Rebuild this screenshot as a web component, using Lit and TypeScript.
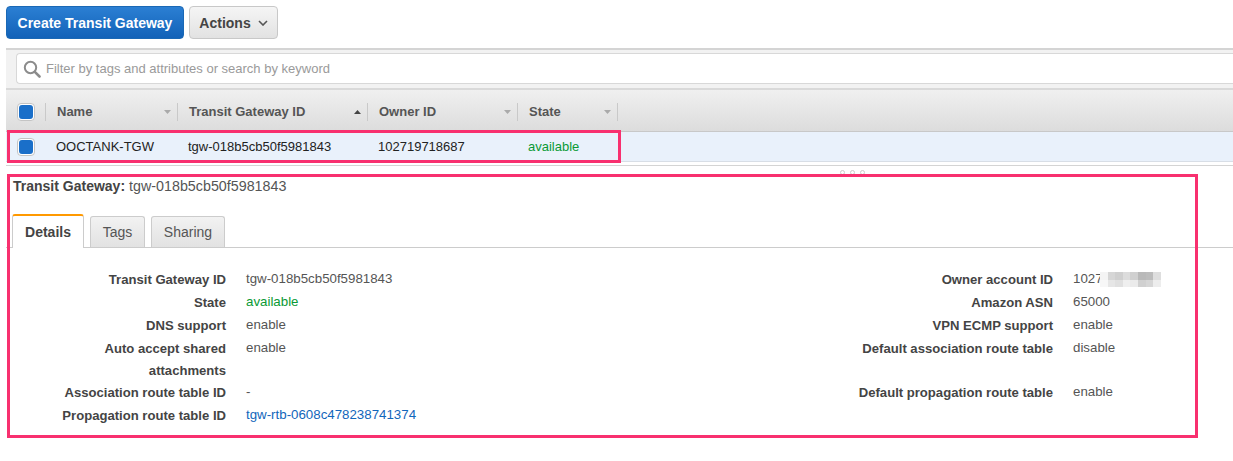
import { LitElement, html, css } from 'lit';
import { customElement } from 'lit/decorators.js';

const caret = (up = false, dark = false) => html`
  <svg class="sort" width="7" height="4" viewBox="0 0 7 4">
    <path d=${up ? 'M0 4L3.5 0L7 4Z' : 'M0 0L3.5 4L7 0Z'} fill=${dark ? '#444' : '#aaa'}></path>
  </svg>
`;

const leftRows = [
  { label: 'Transit Gateway ID', value: 'tgw-018b5cb50f5981843' },
  { label: 'State', value: 'available', kind: 'ok' },
  { label: 'DNS support', value: 'enable' },
  { label: 'Auto accept shared attachments', value: 'enable', tall: true },
  { label: 'Association route table ID', value: '-' },
  { label: 'Propagation route table ID', value: 'tgw-rtb-0608c478238741374', kind: 'link' },
];

const rightRows = [
  { label: 'Owner account ID', value: '1027', blur: true },
  { label: 'Amazon ASN', value: '65000' },
  { label: 'VPN ECMP support', value: 'enable' },
  { label: 'Default association route table', value: 'disable', tall: true },
  { label: 'Default propagation route table', value: 'enable' },
];

// pixelated redaction next to the owner account id, 8 x 2 cells
const blurCells = [
  '#f4f4f4', '#d6d6d6', '#cfcfcf', '#dcdcdc', '#d0d0d0', '#b9b9b9', '#bcbcbc', '#dedede',
  '#f7f7f7', '#e6e6e6', '#e0e0e0', '#efefef', '#ebebeb', '#d0d0d0', '#d6d6d6', '#ededed',
];

@customElement('app-root')
export class AppRoot extends LitElement {
  static styles = css`
    :host {
      display: block;
      font-family: 'Liberation Sans', Arial, sans-serif;
      font-size: 13px;
      color: #444;
    }

    .page {
      position: relative;
      width: 1233px;
      height: 461px;
      overflow: hidden;
      background: #fff;
    }

    .toolbar {
      display: flex;
      gap: 5px;
      height: 48px;
      padding: 6px 0 0 6px;
      box-sizing: border-box;
    }

    button {
      height: 33px;
      border-radius: 4px;
      font-family: inherit;
      font-size: 14px;
      font-weight: bold;
      padding: 0;
    }

    button.primary {
      width: 178px;
      color: #fff;
      background: linear-gradient(#2b7fd3, #1262b8);
      border: 1px solid #1a68b5;
    }

    button.secondary {
      display: flex;
      align-items: center;
      justify-content: center;
      gap: 7px;
      width: 89px;
      color: #444;
      background: linear-gradient(#f5f5f5, #e2e2e2);
      border: 1px solid #c8c8c8;
    }

    .grid {
      margin-left: 6px;
      border-top: 2px solid #d4d4d4;
    }

    .search {
      height: 40px;
      padding: 3px 0 0 10px;
      box-sizing: border-box;
      background: #f2f2f2;
      border-bottom: 2px solid #d9d9d9;
    }

    .search-box {
      display: flex;
      align-items: center;
      gap: 5px;
      height: 31px;
      padding-left: 6px;
      box-sizing: border-box;
      background: #fff;
      border: 1px solid #d8d8d8;
      border-right: none;
      border-radius: 4px 0 0 4px;
      color: #9a9a9a;
      font-size: 13px;
    }

    .head {
      display: flex;
      align-items: center;
      height: 42px;
      padding-top: 2px;
      background: linear-gradient(#f0f0f0, #dcdcdc);
      border-bottom: 1px solid #c8c8c8;
      box-sizing: border-box;
      font-weight: bold;
      color: #555;
    }

    .row {
      display: flex;
      align-items: center;
      height: 30px;
      background: #e9f1fb;
      border-bottom: 1px solid #d8dee6;
      box-sizing: border-box;
      color: #222;
    }

    .c0 { width: 40px; box-sizing: border-box; }
    .c1 { width: 132px; }
    .c2 { width: 190px; }
    .c3 { width: 150px; }
    .c4 { width: 100px; }

    .head > div {
      display: flex;
      align-items: center;
      justify-content: space-between;
      height: 18px;
      box-sizing: border-box;
      padding: 0 6px 0 11px;
      border-right: 1px solid #c9c9c9;
    }

    .head > .c0 {
      justify-content: flex-start;
      padding: 0 0 0 11px;
    }

    .row > div:not(.c0) { padding-left: 10px; box-sizing: border-box; }
    .row > .c0 { padding-left: 11px; }

    .check {
      display: flex;
      align-items: center;
      justify-content: center;
      width: 18px;
      height: 18px;
      box-sizing: border-box;
      background: #fff;
      border: 1px solid #c4c4c4;
      border-radius: 4px;
    }

    .check i {
      display: block;
      width: 14px;
      height: 14px;
      background: #1a6fc9;
      border-radius: 3px;
    }

    .ok { color: #0a9a35; }
    .link { color: #1166bb; }

    .splitter {
      display: flex;
      justify-content: center;
      gap: 5px;
      height: 11px;
      margin: 3px 0 0 6px;
      border-top: 1px solid #d4d4d4;
      padding: 4px 0 0 465px;
      box-sizing: border-box;
    }

    .splitter i {
      width: 5px;
      height: 5px;
      box-sizing: border-box;
      border: 1px solid #ccc;
      border-radius: 50%;
    }

    .title {
      margin: 3px 0 0 13px;
      height: 15px;
      line-height: 15px;
      font-size: 14.3px;
      color: #555;
    }

    .title b {
      font-size: 14px;
      color: #444;
    }

    .tabs {
      display: flex;
      align-items: flex-end;
      gap: 6px;
      height: 33px;
      margin: 20px 0 0 6px;
      padding-left: 6px;
      border-bottom: 1px solid #ccc;
      font-size: 14px;
    }

    .tab {
      display: flex;
      align-items: center;
      justify-content: center;
      height: 31px;
      box-sizing: border-box;
      border: 1px solid #ccc;
      border-bottom: none;
      border-radius: 3px 3px 0 0;
      background: linear-gradient(#f2f2f2, #e2e2e2);
      color: #555;
    }

    .tab.details-tab {
      width: 72px;
      height: 34px;
      margin-bottom: -1px;
      background: #fff;
      border-top: 2px solid #f90;
      font-weight: bold;
      color: #444;
    }

    .tab.tags-tab { width: 55px; }
    .tab.sharing-tab { width: 74px; }

    .details {
      display: flex;
      justify-content: space-between;
      padding: 21px 0 0 0;
    }

    .col {
      display: grid;
      grid-auto-rows: min-content;
      row-gap: 2px;
      align-content: start;
    }

    .col.left { grid-template-columns: 226px 1fr; width: 480px; }
    .col.right { grid-template-columns: 253px 1fr; width: 433px; }

    .label {
      padding-left: 40px;
      text-align: right;
      font-size: 13.1px;
      font-weight: bold;
      line-height: 21px;
      color: #444;
    }

    .value {
      position: relative;
      padding-left: 20px;
      font-size: 13.3px;
      line-height: 20px;
      color: #555;
    }

    .value.ok { color: #0a9a35; }
    .value.link { color: #1166bb; }

    .label.tall {
      height: 42px;
      line-height: 22px;
    }

    /* sits over the end of the account id */
    .redact {
      position: absolute;
      left: 47px;
      top: 3px;
      display: grid;
      grid-template-columns: repeat(8, 7.6px);
      grid-auto-rows: 7.5px;
    }

    /* annotation frames drawn over the screenshot */
    .mark {
      position: absolute;
      box-sizing: border-box;
      border: 3px solid #f8306f;
      pointer-events: none;
    }

    .mark.row-mark { left: 7px; top: 130px; width: 614px; height: 33px; }
    .mark.detail-mark { left: 7px; top: 174px; width: 1191px; height: 264px; }
  `;

  renderRow(r: { label: string; value: string; kind?: string; tall?: boolean; blur?: boolean }) {
    return html`
      <div class="label ${r.tall ? 'tall' : ''}">${r.label}</div>
      <div class="value ${r.kind ?? ''}">${r.value}${r.blur
        ? html`<span class="redact">${blurCells.map((c) => html`<i style="background:${c}"></i>`)}</span>`
        : ''}</div>
    `;
  }

  render() {
    return html`
      <div class="page">
        <div class="toolbar">
          <button class="primary">Create Transit Gateway</button>
          <button class="secondary">
            Actions
            <svg width="10" height="6" viewBox="0 0 10 6">
              <path d="M1 1L5 5L9 1" fill="none" stroke="#555" stroke-width="1.6"></path>
            </svg>
          </button>
        </div>

        <div class="grid">
          <div class="search">
            <div class="search-box">
              <svg width="18" height="18" viewBox="0 0 18 18">
                <circle cx="7.5" cy="7.5" r="5.7" fill="none" stroke="#8c8c8c" stroke-width="2"></circle>
                <path d="M11.8 11.8L16.5 16.5" stroke="#8c8c8c" stroke-width="2.6" stroke-linecap="round"></path>
              </svg>
              Filter by tags and attributes or search by keyword
            </div>
          </div>
          <div class="head">
            <div class="c0"><span class="check"><i></i></span></div>
            <div class="c1">Name ${caret()}</div>
            <div class="c2">Transit Gateway ID ${caret(true, true)}</div>
            <div class="c3">Owner ID ${caret()}</div>
            <div class="c4">State ${caret()}</div>
          </div>
          <div class="row">
            <div class="c0"><span class="check"><i></i></span></div>
            <div class="c1">OOCTANK-TGW</div>
            <div class="c2">tgw-018b5cb50f5981843</div>
            <div class="c3">102719718687</div>
            <div class="c4 ok">available</div>
          </div>
        </div>

        <div class="splitter"><i></i><i></i><i></i></div>

        <div class="title"><b>Transit Gateway:</b> tgw-018b5cb50f5981843</div>

        <div class="tabs">
          <div class="tab details-tab">Details</div>
          <div class="tab tags-tab">Tags</div>
          <div class="tab sharing-tab">Sharing</div>
        </div>

        <div class="details">
          <div class="col left">${leftRows.map((r) => this.renderRow(r))}</div>
          <div class="col right">${rightRows.map((r) => this.renderRow(r))}</div>
        </div>

        <div class="mark row-mark"></div>
        <div class="mark detail-mark"></div>
      </div>
    `;
  }
}
